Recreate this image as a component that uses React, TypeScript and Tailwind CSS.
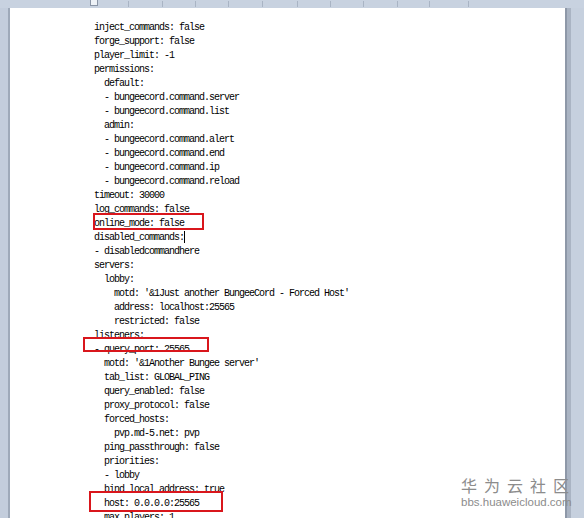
import React from "react";

const lines: [number, string][] = [
  [0, "inject_commands: false"],
  [0, "forge_support: false"],
  [0, "player_limit: -1"],
  [0, "permissions:"],
  [2, "default:"],
  [2, "- bungeecord.command.server"],
  [2, "- bungeecord.command.list"],
  [2, "admin:"],
  [2, "- bungeecord.command.alert"],
  [2, "- bungeecord.command.end"],
  [2, "- bungeecord.command.ip"],
  [2, "- bungeecord.command.reload"],
  [0, "timeout: 30000"],
  [0, "log_commands: false"],
  [0, "online_mode: false"],
  [0, "disabled_commands:"],
  [0, "- disabledcommandhere"],
  [0, "servers:"],
  [2, "lobby:"],
  [4, "motd: '&1Just another BungeeCord - Forced Host'"],
  [4, "address: localhost:25565"],
  [4, "restricted: false"],
  [0, "listeners:"],
  [0, "- query_port: 25565"],
  [2, "motd: '&1Another Bungee server'"],
  [2, "tab_list: GLOBAL_PING"],
  [2, "query_enabled: false"],
  [2, "proxy_protocol: false"],
  [2, "forced_hosts:"],
  [4, "pvp.md-5.net: pvp"],
  [2, "ping_passthrough: false"],
  [2, "priorities:"],
  [2, "- lobby"],
  [2, "bind_local_address: true"],
  [2, "host: 0.0.0.0:25565"],
  [2, "max_players: 1"],
];

const ticks = [128, 162, 195, 228, 262, 297, 330, 363, 397, 429, 468];

export default function App() {
  return (
    <div className="relative w-[584px] h-[518px] overflow-hidden bg-[#c6d0de] flex flex-col">
      {/* ruler */}
      <div className="relative h-[8px] shrink-0 bg-[#c8d2e0]">
        <div className="absolute left-[90px] top-0 w-[8px] h-[6px] border border-[#8a95a6] border-t-0 bg-[#eef2f7]" />
        {ticks.map((t) => (
          <div key={t} className="absolute top-[1px] w-px h-[6px] bg-[#a9b4c4]" style={{ left: t }} />
        ))}
      </div>
      <div className="flex flex-1 min-h-0">
        <div className="w-[8px] shrink-0 bg-[#c3cddc]" />
        <div className="w-[2px] shrink-0 bg-[#9ea9b9]" />
        <div className="relative w-[555px] shrink-0 bg-white pl-[84px] pt-[13px] overflow-hidden">
          <div className="font-['Liberation_Mono',monospace] text-[10px] tracking-[-1px] text-black leading-[14px] whitespace-pre">
            {lines.map(([ind, txt], i) => (
              <div key={i} style={{ paddingLeft: ind * 5 }} className="h-[14px]">
                {txt}
              </div>
            ))}
          </div>
          {/* red highlight boxes */}
          <div className="absolute left-[83px] top-[205px] w-[111px] h-[17px] border-2 border-[#d9161c]" />
          <div className="absolute left-[73px] top-[329px] w-[126px] h-[15px] border-2 border-[#d9161c]" />
          <div className="absolute left-[79px] top-[483px] w-[134px] h-[21px] border-2 border-[#d9161c]" />
          {/* text cursor */}
          <div className="absolute left-[174px] top-[223px] w-px h-[12px] bg-black" />
        </div>
        <div className="w-[2px] shrink-0 bg-[#8e98a8]" />
        <div className="w-[4px] shrink-0 bg-[#aab4c3]" />
        <div className="flex-1 bg-[#c6d0de]" />
      </div>
      {/* watermark */}
      <div className="absolute left-[461px] top-[476px] flex flex-col items-start gap-[1px] text-[#8c8c8c]">
        <div className="font-['Noto_Sans_CJK_SC',sans-serif] text-[16px] leading-[19px] tracking-[7px]">华为云社区</div>
        <div className="font-['Liberation_Sans',sans-serif] text-[11.5px] leading-[13px]">bbs.huaweicloud.com</div>
      </div>
    </div>
  );
}
